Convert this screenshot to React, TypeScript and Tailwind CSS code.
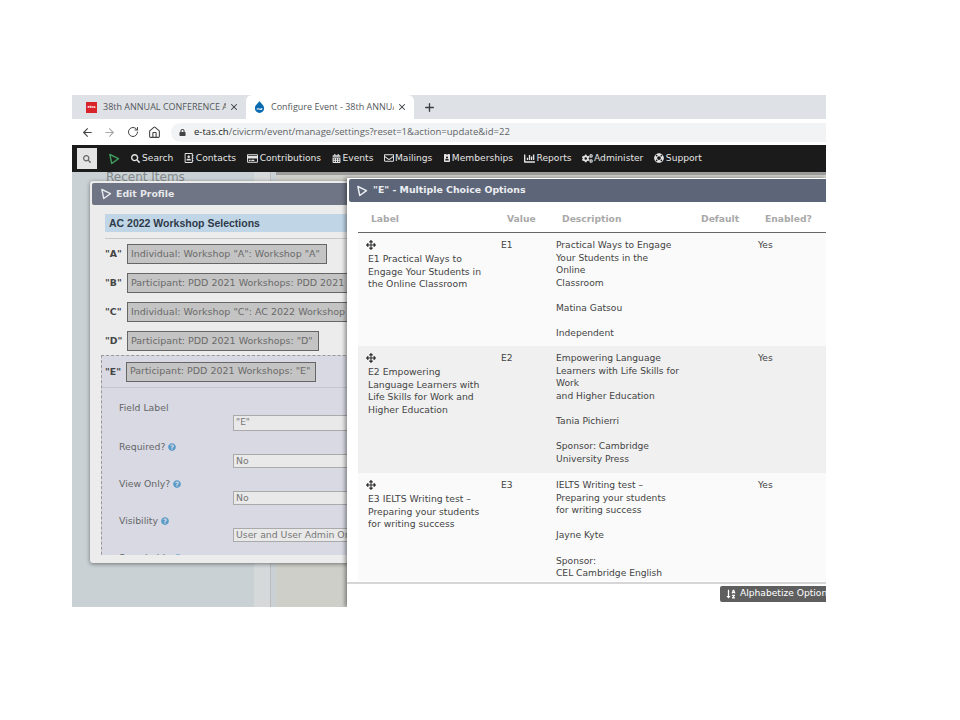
import React from 'react';
import { ArrowLeft, ArrowRight, RotateCw, Home, Plus, X } from 'lucide-react';
import {
  FaSearch,
  FaRegAddressBook,
  FaRegCreditCard,
  FaCalendarAlt,
  FaRegEnvelope,
  FaIdBadge,
  FaChartBar,
  FaCogs,
  FaLifeRing,
  FaArrowsAlt,
  FaSortAlphaDown,
  FaQuestionCircle,
  FaLock,
} from 'react-icons/fa';

const navItems = [
  { label: 'Search', icon: <FaSearch size={9} />, gap: 'gap-[2px]' },
  { label: 'Contacts', icon: <FaRegAddressBook size={10} />, gap: 'gap-[2px]' },
  { label: 'Contributions', icon: <FaRegCreditCard size={11} />, gap: 'gap-[2px]' },
  { label: 'Events', icon: <FaCalendarAlt size={9} />, gap: 'gap-[2px]' },
  { label: 'Mailings', icon: <FaRegEnvelope size={10} />, gap: 'gap-[1px]' },
  { label: 'Memberships', icon: <FaIdBadge size={8} />, gap: 'gap-[1px]' },
  { label: 'Reports', icon: <FaChartBar size={11} />, gap: 'gap-[2px]' },
  { label: 'Administer', icon: <FaCogs size={11} />, gap: 'gap-[1px]' },
  { label: 'Support', icon: <FaLifeRing size={10} />, gap: 'gap-[2px]' },
];

const profileRows = [
  { key: '"A"', text: 'Individual: Workshop "A": Workshop "A"', w: 'w-[200px]' },
  { key: '"B"', text: 'Participant: PDD 2021 Workshops: PDD 2021 Workshops: "B"', w: 'w-[290px]' },
  { key: '"C"', text: 'Individual: Workshop "C": AC 2022 Workshop "C"', w: 'w-[290px]' },
  { key: '"D"', text: 'Participant: PDD 2021 Workshops: "D"', w: 'w-[192px]' },
];

const fields = [
  { label: 'Required?', value: 'No' },
  { label: 'View Only?', value: 'No' },
  { label: 'Visibility', value: 'User and User Admin Only' },
];

const options = [
  {
    label: ['E1 Practical Ways to', 'Engage Your Students in', 'the Online Classroom'],
    value: 'E1',
    desc: ['Practical Ways to Engage', 'Your Students in the', 'Online', 'Classroom', '', 'Matina Gatsou', '', 'Independent'],
    row: 'bg-[#fafafa] h-[113px]',
  },
  {
    label: ['E2 Empowering', 'Language Learners with', 'Life Skills for Work and', 'Higher Education'],
    value: 'E2',
    desc: ['Empowering Language', 'Learners with Life Skills for', 'Work', 'and Higher Education', '', 'Tania Pichierri', '', 'Sponsor: Cambridge', 'University Press'],
    row: 'bg-[#f0f0f0] h-[127px]',
  },
  {
    label: ['E3 IELTS Writing test –', 'Preparing your students', 'for writing success'],
    value: 'E3',
    desc: ['IELTS Writing test –', 'Preparing your students', 'for writing success', '', 'Jayne Kyte', '', 'Sponsor:', 'CEL Cambridge English'],
    row: 'bg-[#fafafa] h-[109px]',
  },
];

const CiviLogo = ({ className, size }: { className: string; size: number }) => (
  <svg width={size} height={size} viewBox="0 0 16 16" fill="none" className={className}>
    <path d="M2.5 2 L14 7.5 L5 14 Z" stroke="currentColor" strokeWidth="1.9" strokeLinejoin="round" />
  </svg>
);

const Lines = ({ lines }: { lines: string[] }) => (
  <>
    {lines.map((line, i) => (
      <div key={i} className="h-[12.6px] whitespace-nowrap">
        {line}
      </div>
    ))}
  </>
);

const Tab = ({ active, icon, title }: { active?: boolean; icon: React.ReactNode; title: string }) => (
  <div
    className={`flex items-center h-[24px] w-[168px] pl-[8px] pr-[7px] rounded-t-[6px] ${active ? 'bg-white' : ''}`}
  >
    {icon}
    <span className="ml-[6px] flex-1 overflow-hidden whitespace-nowrap text-[9px] text-[#55585c]">{title}</span>
    <X size={10} strokeWidth={2.5} className="text-[#3c4043] ml-[3px]" />
  </div>
);

const EditProfile = () => (
  <div className="absolute left-[18px] top-[9px] w-[300px] h-[382px] bg-[#ececec] rounded-[3px] shadow-[0_1px_4px_rgba(0,0,0,0.45)] p-[2px] flex flex-col font-['DejaVu_Sans',sans-serif]">
    <div className="h-[22px] shrink-0 bg-[#6f7585] rounded-[2px] flex items-center pl-[8px] text-[#e6e7ea] text-[9.35px] font-bold">
      <CiviLogo size={12} className="text-[#e6e7ea] mr-[4px]" />
      Edit Profile
    </div>
    <div className="flex-1 overflow-hidden pl-[13px] pt-[9px]">
      <div className="h-[18px] bg-[#c0d6e6] flex items-center pl-[4px] pt-[1px] text-[10.5px] font-bold text-[#2f3a4a] font-['Liberation_Sans',sans-serif]">
        AC 2022 Workshop Selections
      </div>
      <div className="mt-[6px] border-t border-[#c8c8c8] pt-[5px]">
        {profileRows.map((r) => (
          <div key={r.key} className="flex items-center h-[20px] mb-[9px] gap-[3px]">
            <span className="shrink-0 text-[9.3px] font-bold text-[#444] w-[19px]">{r.key}</span>
            <div
              className={`${r.w} shrink-0 h-[20px] border-[1.5px] border-[#666] bg-[#c4c4c4] flex items-center pl-[3px] text-[9.5px] text-[#6a6a6a] whitespace-nowrap overflow-hidden`}
            >
              {r.text}
            </div>
          </div>
        ))}
      </div>
      <div className="-ml-[4px] -mt-[5px] w-[300px] bg-[#d8d9e3] border-l border-t border-dashed border-[#999] h-[240px] overflow-hidden">
        <div className="flex items-center h-[32px] pl-[3px] gap-[2px] border-b border-[#c4c5cf]">
          <span className="shrink-0 text-[9.3px] font-bold text-[#444] w-[19px]">"E"</span>
          <div className="w-[190px] h-[20px] border-[1.5px] border-[#666] bg-[#c4c4c4] flex items-center pl-[3px] text-[9.5px] text-[#6a6a6a] whitespace-nowrap">
            Participant: PDD 2021 Workshops: "E"
          </div>
        </div>
        <div className="pl-[17px] pt-[14px] text-[9.3px] text-[#666]">
          <div className="leading-[12px] mb-[1px]">Field Label</div>
          <div className="ml-[114px] h-[16px] w-[200px] border-[1.5px] border-[#aaa] bg-[#e9e9e9] flex items-center pl-[2px] text-[9px] text-[#777]">
            "E"
          </div>
          {fields.map((f) => (
            <div key={f.label} className="mt-[10px]">
              <div className="flex items-center gap-[3px] leading-[12px] mb-[1px]">
                {f.label}
                <FaQuestionCircle size={8} className="text-[#5a9bc9]" />
              </div>
              <div className="ml-[114px] h-[14px] w-[200px] border-[1.5px] border-[#aaa] bg-[#e9e9e9] flex items-center pl-[2px] text-[#777] whitespace-nowrap">
                {f.value}
              </div>
            </div>
          ))}
          <div className="mt-[10px] flex items-center gap-[3px] leading-[12px]">
            Searchable
            <FaQuestionCircle size={8} className="text-[#5a9bc9]" />
          </div>
        </div>
      </div>
    </div>
    <div className="h-[6px] shrink-0" />
  </div>
);

const OptionsDialog = () => (
  <div className="absolute left-[275px] top-[6px] right-0 bottom-0 bg-white shadow-[-2px_0_4px_rgba(0,0,0,0.4)] flex flex-col font-['DejaVu_Sans',sans-serif]">
    <div className="ml-[2px] mt-[1px] h-[23px] shrink-0 bg-[#5d6679] rounded-l-[2px] flex items-center pl-[7px] text-[#eceef2] text-[9.4px] font-bold">
      <CiviLogo size={12} className="text-[#eceef2] mr-[5px]" />
      "E" - Multiple Choice Options
    </div>
    <div className="ml-[11px] w-[468px] h-[379px] overflow-hidden shrink-0">
      <div className="h-[31px] grid grid-cols-[136px_55px_139px_64px_1fr] items-center pl-[13px] pt-[4px] border-b-[1.5px] border-[#666] text-[9.2px] font-bold text-[#a9a9a9]">
        <span>Label</span>
        <span>Value</span>
        <span>Description</span>
        <span>Default</span>
        <span>Enabled?</span>
      </div>
      {options.map((o) => (
        <div key={o.value} className={`grid grid-cols-[143px_55px_202px_1fr] pt-[6px] text-[9.15px] leading-[12.6px] text-[#444] ${o.row}`}>
          <div className="pl-[10px] text-[9.25px]">
            <FaArrowsAlt size={10} className="text-[#333] -ml-[2px] mb-[3px] mt-[1px]" />
            <Lines lines={o.label} />
          </div>
          <span>{o.value}</span>
          <div>
            <Lines lines={o.desc} />
          </div>
          <span>Yes</span>
        </div>
      ))}
    </div>
    <div className="border-t-2 border-[#d6d6d6] flex justify-end pt-[2px] mt-[1px]">
      <div className="w-[106px] h-[16px] bg-[#5f5f5f] rounded-l-[2px] flex items-center pl-[6px] gap-[4px] text-[9.15px] text-white whitespace-nowrap overflow-hidden">
        <FaSortAlphaDown size={10} className="shrink-0" />
        Alphabetize Options
      </div>
    </div>
  </div>
);

export default function App() {
  return (
    <div className="w-[960px] h-[720px] bg-white pt-[95px] pl-[72px] overflow-hidden">
      <div className="w-[754px] h-[512px] flex flex-col overflow-hidden">
        {/* browser tabs */}
        <div className="h-[24px] shrink-0 bg-[#dee1e6] flex items-center pl-[6px] font-['Open_Sans',sans-serif]">
          <Tab
            title="38th ANNUAL CONFERENCE AND EXHIBITION"
            icon={
              <div className="w-[11px] h-[11px] shrink-0 bg-[#d8232a] text-white text-[4px] font-bold flex items-center justify-center">
                etcs
              </div>
            }
          />
          <Tab
            active
            title="Configure Event - 38th ANNUAL CONFERENCE"
            icon={
              <svg width="11" height="12" viewBox="0 0 12 13" className="shrink-0">
                <path d="M6 0 C7 2.5 11 4 11 8 A5 5 0 0 1 1 8 C1 4 5 2.5 6 0 Z" fill="#0a6ab0" />
                <path d="M3 9 C5 7 7 11 9 8" stroke="#fff" strokeWidth="1.2" fill="none" />
              </svg>
            }
          />
          <Plus size={13} strokeWidth={2.5} className="ml-[9px] text-[#3c4043]" />
        </div>
        {/* address bar */}
        <div className="h-[26px] shrink-0 bg-white flex items-center pl-[9px] text-[#5f6368] font-['Open_Sans',sans-serif]">
          <ArrowLeft size={13} strokeWidth={2} className="text-[#444]" />
          <ArrowRight size={13} strokeWidth={2} className="ml-[9px] text-[#aaa]" />
          <RotateCw size={12} strokeWidth={2} className="ml-[11px] text-[#444]" />
          <Home size={13} strokeWidth={2} className="ml-[9px] text-[#444]" />
          <div className="ml-[10px] flex-1 h-[19px] bg-[#f1f3f4] rounded-l-full flex items-center pl-[8px] text-[9.55px]">
            <FaLock size={7} className="text-[#444] mr-[8px]" />
            <span className="text-[#222]">e-tas.ch</span>
            <span>/civicrm/event/manage/settings?reset=1&amp;action=update&amp;id=22</span>
          </div>
        </div>
        {/* civicrm menu */}
        <div className="h-[27px] shrink-0 bg-[#1b1b1b] flex items-center font-['DejaVu_Sans',sans-serif] text-[9.15px] text-[#e4e4e4]">
          <div className="ml-[5px] w-[20px] h-[21px] bg-[#e4e4e4] flex items-center justify-center">
            <FaSearch size={8} className="text-[#666]" />
          </div>
          <CiviLogo size={12} className="text-[#3f9b5b] ml-[11px] mr-[11px]" />
          <div className="flex items-center gap-[10.5px]">
            {navItems.map((item) => (
              <div key={item.label} className={`flex items-center ${item.gap} whitespace-nowrap`}>
                {item.icon}
                {item.label}
              </div>
            ))}
          </div>
        </div>
        {/* page behind the dialogs */}
        <div className="relative flex-1 flex bg-[#c9d1d4] overflow-hidden font-['DejaVu_Sans',sans-serif]">
          <div className="w-[182px] shrink-0 pl-[34px] text-[12px] leading-[13px] text-[#83898c] -mt-[1px] whitespace-nowrap">
            Recent Items
          </div>
          <div className="w-[17px] shrink-0 bg-[#d5d9d9] border-r border-[#bcbcbc]" />
          <div className="flex-1 bg-[#cfcfca] border-t-[3px] border-[#9c9c9c] ml-[5px] flex items-end pb-[21px] justify-end text-[9px] text-[#888]">
            Fo
          </div>
          <EditProfile />
          <OptionsDialog />
        </div>
      </div>
    </div>
  );
}
